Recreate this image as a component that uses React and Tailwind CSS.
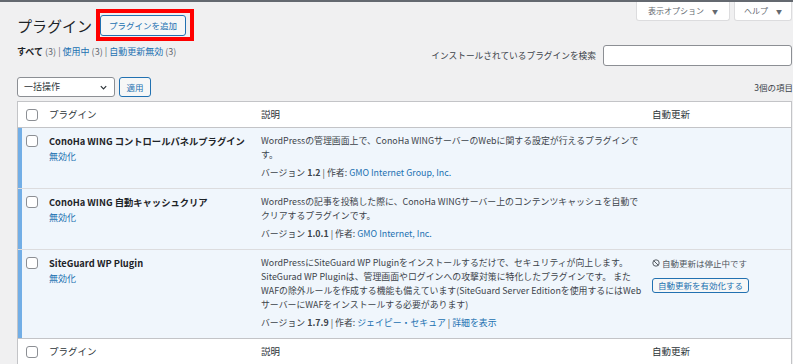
const plugins = [
  {
    name: 'ConoHa WING コントロールパネルプラグイン',
    desc: ['WordPressの管理画面上で、ConoHa WINGサーバーのWebに関する設定が行えるプラグインで', 'す。'],
    version: '1.2',
    author: 'GMO Internet Group, Inc.',
  },
  {
    name: 'ConoHa WING 自動キャッシュクリア',
    desc: ['WordPressの記事を投稿した際に、ConoHa WINGサーバー上のコンテンツキャッシュを自動で', 'クリアするプラグインです。'],
    version: '1.0.1',
    author: 'GMO Internet, Inc.',
  },
  {
    name: 'SiteGuard WP Plugin',
    desc: [
      'WordPressにSiteGuard WP Pluginをインストールするだけで、セキュリティが向上します。',
      'SiteGurad WP Pluginは、管理画面やログインへの攻撃対策に特化したプラグインです。 また',
      'WAFの除外ルールを作成する機能も備えています(SiteGuard Server Editionを使用するにはWeb',
      'サーバーにWAFをインストールする必要があります)',
    ],
    version: '1.7.9',
    author: 'ジェイピー・セキュア',
    details: true,
    autoOff: true,
  },
];

function Checkbox() {
  return <span className="block w-[12px] h-[12px] rounded-[3px] border border-[#8c8f94] bg-white" />;
}

function HeadRow({ top }) {
  return (
    <div className={`grid grid-cols-[31px_212px_391px_1fr] h-[26px] items-center text-[9.5px] text-[#2c3338] bg-white ${top ? 'border-b' : 'border-t'} border-[#c3c4c7]`}>
      <div className="pl-[8px]"><Checkbox /></div>
      <div>プラグイン</div>
      <div>説明</div>
      <div>自動更新</div>
    </div>
  );
}

export default function App() {
  return (
    <div className="w-[793px] min-h-screen bg-[#f0f0f1] text-[#3c434a] font-['Noto_Sans_CJK_JP',sans-serif] overflow-hidden">
      <div className="h-[2px] bg-[#646970]" />

      {/* Title + screen meta */}
      <div className="flex justify-between items-start pr-[1px]">
        <div className="pl-[17px] pt-[13px] flex items-center h-[34px] leading-none">
          <h1 className="text-[15px] leading-[21px] text-[#1d2327] font-normal">プラグイン</h1>
          <div className="relative ml-[8px] flex">
            <button className="h-[21px] px-[8px] text-[8.5px] leading-none text-[#2271b1] bg-[#f6f7f7] border border-[#2271b1] rounded-[3px]">
              プラグインを追加
            </button>
            <div className="absolute left-[-4px] right-[-8px] top-[-6px] bottom-[-5px] border-[4px] border-[#ff0000] pointer-events-none" />
          </div>
        </div>
        <div className="flex gap-[4px]">
          <div className="w-[94px] h-[19px] flex items-center justify-center gap-[8px] bg-white border border-t-0 border-[#dcdcde] rounded-b-[3px] text-[8px] text-[#646970]">
            表示オプション <span className="text-[6px]">▼</span>
          </div>
          <div className="w-[58px] h-[19px] flex items-center justify-center gap-[8px] bg-white border border-t-0 border-[#dcdcde] rounded-b-[3px] text-[8px] text-[#646970]">
            ヘルプ <span className="text-[6px]">▼</span>
          </div>
        </div>
      </div>

      {/* Filters + search */}
      <div className="flex justify-between items-start pl-[17px] pr-[1px] mt-[9px]">
        <div className="text-[9px] leading-[14px] text-[#646970] whitespace-nowrap">
          <span className="font-bold text-[#1d2327]">すべて</span> (3) | <span className="text-[#2271b1]">使用中</span> (3) | <span className="text-[#2271b1]">自動更新無効</span> (3)
        </div>
        <div className="flex items-center gap-[7px]">
          <span className="text-[8.7px] text-[#3c434a]">インストールされているプラグインを検索</span>
          <div className="w-[189px] h-[21px] bg-white border border-[#8c8f94] rounded-[3px]" />
        </div>
      </div>

      {/* Tablenav */}
      <div className="flex justify-between items-center pl-[17px] pr-0 mt-[11px]">
        <div className="flex gap-[4px]">
          <div className="w-[98px] h-[20px] flex items-center justify-between pl-[6px] pr-[6px] bg-white border border-[#8c8f94] rounded-[3px] text-[9px] text-[#2c3338]">
            一括操作
            <svg width="9" height="9" viewBox="0 0 10 10" fill="none" stroke="#2c3338" strokeWidth="1.3">
              <path d="M2 3.5 L5 6.5 L8 3.5" />
            </svg>
          </div>
          <button className="w-[32px] h-[20px] text-[8.5px] leading-none text-[#2271b1] bg-[#f6f7f7] border border-[#2271b1] rounded-[3px]">
            適用
          </button>
        </div>
        <span className="text-[8.5px] text-[#3c434a]">3個の項目</span>
      </div>

      {/* Table */}
      <div className="ml-[17px] mr-[1px] mt-[4px] border border-[#c3c4c7] bg-white">
        <HeadRow top />
        {plugins.map((p, i) => (
          <div
            key={i}
            className={`grid grid-cols-[31px_212px_391px_1fr] pt-[6px] pb-[8px] bg-[#f0f6fc] shadow-[inset_4px_0_0_#72aee6] ${i < plugins.length - 1 ? 'border-b border-[#dcdcde]' : ''}`}
          >
            <div className="pl-[8px] pt-[1px]"><Checkbox /></div>
            <div>
              <div className="text-[9.3px] leading-[14px] font-bold text-[#1d2327] whitespace-nowrap">{p.name}</div>
              <div className="mt-[2px] text-[9px] leading-[14px] text-[#2271b1]">無効化</div>
            </div>
            <div className="text-[8.9px] leading-[14px] whitespace-nowrap">
              {p.desc.map((line, j) => (
                <div key={j}>{line}</div>
              ))}
              <div className="mt-[4px]">
                バージョン <span className="font-semibold">{p.version}</span> | 作者: <span className="text-[#2271b1]">{p.author}</span>
                {p.details && (
                  <> | <span className="text-[#2271b1]">詳細を表示</span></>
                )}
              </div>
            </div>
            <div>
              {p.autoOff && (
                <div>
                  <div className="flex items-center gap-[2px] text-[8.5px] leading-[14px] text-[#50575e]">
                    <svg width="8" height="8" viewBox="0 0 10 10" fill="none" stroke="#50575e" strokeWidth="1.2">
                      <circle cx="5" cy="5" r="4" />
                      <path d="M2.2 2.2 L7.8 7.8" />
                    </svg>
                    自動更新は停止中です
                  </div>
                  <button className="mt-[3px] h-[15px] px-[5px] text-[8.5px] leading-none text-[#2271b1] bg-[#f6f7f7] border border-[#2271b1] rounded-[3px] whitespace-nowrap">
                    自動更新を有効化する
                  </button>
                </div>
              )}
            </div>
          </div>
        ))}
        <HeadRow />
      </div>
    </div>
  );
}
